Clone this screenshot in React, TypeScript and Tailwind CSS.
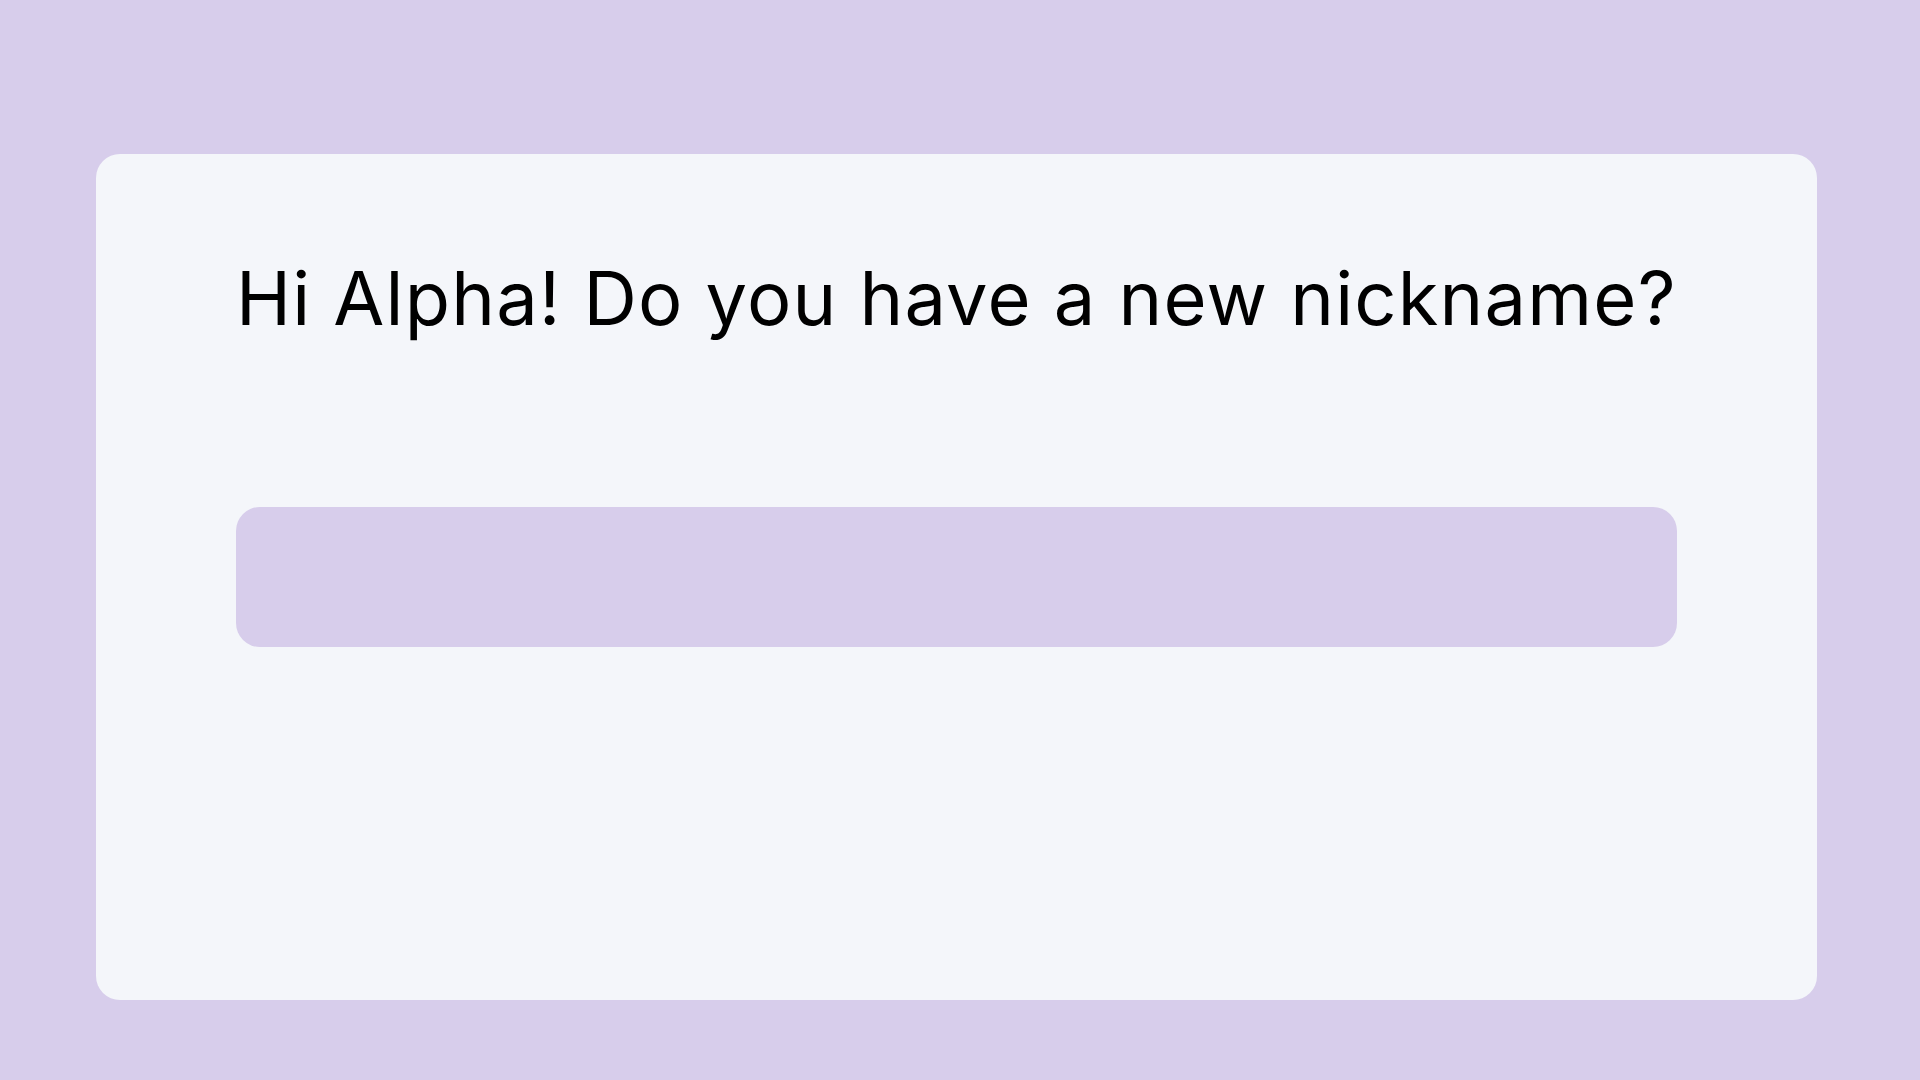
export default function App() {
  return (
    <div className="min-h-screen w-full bg-[#d7cdeb] pt-[154px] pl-[96px]">
      <div className="flex h-[846px] w-[1721px] flex-col rounded-[24px] bg-[#f4f6fa] px-[140px] pt-[107px]">
        <h1
          className="text-[74px] leading-none font-normal tracking-[1.2px] whitespace-nowrap text-black"
          style={{ fontFamily: '"Inter", "Lato", sans-serif' }}
        >
          Hi Alpha! Do you have a new nickname?
        </h1>
        <input
          type="text"
          aria-label="Nickname"
          className="mt-[172px] h-[140px] w-full rounded-[24px] bg-[#d7cdeb] px-8 text-[40px] outline-none"
        />
      </div>
    </div>
  );
}
